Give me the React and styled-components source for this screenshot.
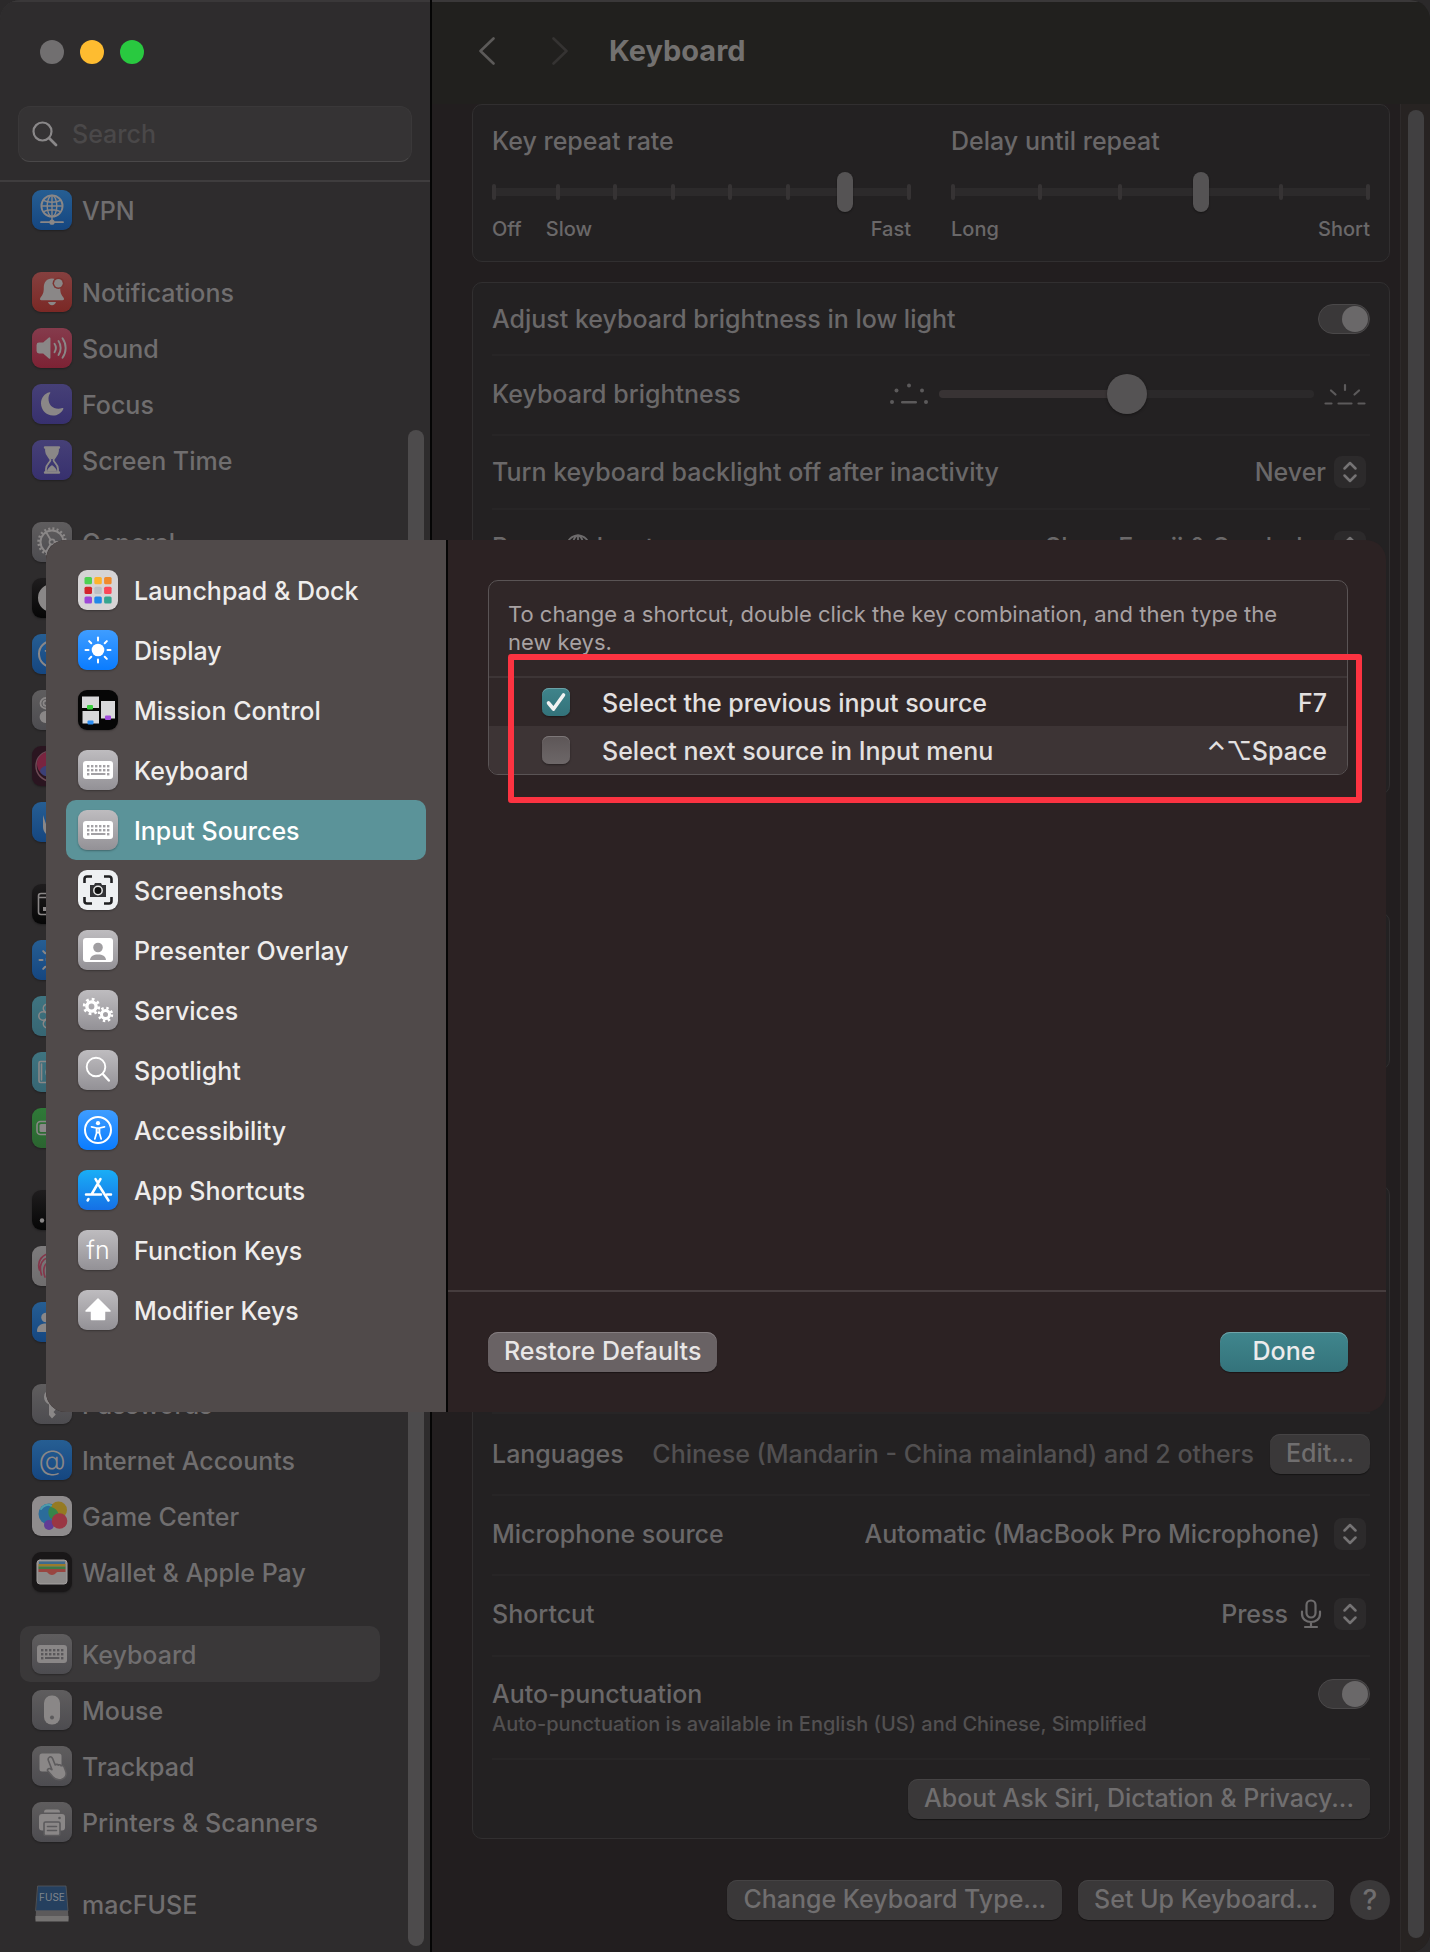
import React from "react";
import styled, { createGlobalStyle, css } from "styled-components";

const GlobalStyle = createGlobalStyle`
  *, *::before, *::after { box-sizing: border-box; }
  body {
    margin: 0;
    background: #2b292a;
    font-family: Inter, "Liberation Sans", sans-serif;
    font-size: 25px;
    font-weight: 500;
    line-height: 32px;
    color: #6a6869;
  }
  button, input, select { font: inherit; color: inherit; }
`;

/* ---------- window ---------- */

const Window = styled.div`
  position: relative;
  display: flex;
  min-height: 100vh;
  overflow: hidden;
  border-radius: 20px 20px 20px 0;
  box-shadow: inset 0 2px 0 #3a3839;
`;

const Sidebar = styled.aside`
  display: flex;
  flex-direction: column;
  flex: 0 0 432px;
  min-width: 0;
  background: #2e2c2d;
  border-right: 2px solid #050505;
  box-shadow: inset 0 2px 0 #3a3839;
`;

const Lights = styled.div`
  display: flex;
  gap: 16px;
  padding: 40px 40px 42px;
`;

const Light = styled.button`
  width: 24px;
  height: 24px;
  padding: 0;
  border: 0;
  border-radius: 50%;
  background: ${(p) => p.$color};
`;

const SearchField = styled.label`
  display: flex;
  align-items: center;
  gap: 14px;
  height: 56px;
  margin: 0 18px 18px;
  padding: 0 13px;
  border: 1px solid #3a3839;
  border-bottom-color: #4a4849;
  border-radius: 12px;
  background: #353334;
`;

const SearchInput = styled.input`
  flex: 1;
  min-width: 0;
  padding: 0;
  border: 0;
  outline: 0;
  background: transparent;
  &::placeholder { color: #4a4849; opacity: 1; }
`;

const SidebarBody = styled.div`
  display: flex;
  flex: 1;
  padding-left: 20px;
  border-top: 2px solid #3f3d3e;
`;

const Nav = styled.nav`
  flex: 1;
  min-width: 0;
  display: flex;
  flex-direction: column;
  gap: 26px;
  margin-right: 28px;
  padding-bottom: 20px;
`;

const NavGroup = styled.ul`
  margin: 0;
  padding: 0;
  list-style: none;
`;

const NavLink = styled.a`
  display: flex;
  align-items: center;
  gap: 10px;
  height: 56px;
  padding: 0 12px;
  border-radius: 10px;
  color: #706e6f;
  text-decoration: none;
  white-space: nowrap;
  background: ${(p) => (p.$active ? "#3a3839" : "transparent")};
`;

const LinkText = styled.span`
  padding-top: 2px;
`;

const SidebarThumb = styled.div`
  flex: none;
  width: 16px;
  margin: 248px 6px 6px 0;
  border-radius: 8px;
  background: #4d4b4c;
`;

const Tile = styled.span`
  flex: none;
  display: grid;
  place-items: center;
  width: 40px;
  height: 40px;
  border-radius: 9px;
  background: ${(p) => p.$bg};
  color: ${(p) => p.$color || "#fff"};
  overflow: hidden;
  ${(p) => !p.$flat && css`box-shadow: 0 1px 2px rgba(0, 0, 0, 0.3);`}
`;

const TileText = styled.span`
  font-size: ${(p) => p.$size}px;
  font-weight: 300;
  line-height: ${(p) => p.$line}px;
`;

/* ---------- main column ---------- */

const Main = styled.main`
  flex: 1;
  min-width: 0;
  display: flex;
  flex-direction: column;
  background: #221e1f;
`;

const Header = styled.header`
  display: flex;
  align-items: center;
  height: 104px;
  padding: 0 40px 4px 47px;
  background: #21201e;
  border-top: 2px solid #3a3839;
`;

const NavArrow = styled.button`
  display: block;
  width: 16px;
  height: 28px;
  margin-right: ${(p) => p.$after}px;
  padding: 0;
  border: 0;
  background: none;
  color: ${(p) => p.$color};
`;

const Title = styled.h1`
  margin: 0;
  font-size: 29px;
  line-height: 36px;
  font-weight: 700;
  color: #737170;
`;

const ScrollArea = styled.div`
  display: flex;
  flex: 1;
`;

const Content = styled.div`
  flex: 1;
  min-width: 0;
  padding: 0 10px 32px 40px;
`;

const MainTrack = styled.div`
  display: flex;
  flex: 0 0 30px;
  padding: 6px 5px 14px 7px;
  border-left: 1px solid #2e2a2a;
  background: #272322;
`;

const MainThumb = styled.div`
  width: 16px;
  border-radius: 8px;
  background: #414041;
`;

const Card = styled.section`
  min-height: ${(p) => p.$min || 0}px;
  margin-bottom: ${(p) => p.$after}px;
  padding: 0 19px;
  border: 1px solid #312f30;
  border-radius: 10px;
  background: #232122;
`;

const RepeatGrid = styled.div`
  display: grid;
  grid-template-columns: 1fr 1fr;
  gap: 40px;
  padding: 20px 0;
`;

const RepeatField = styled.div`
  display: flex;
  flex-direction: column;
`;

const StepSlider = styled.div`
  display: grid;
  align-items: center;
  margin: 15px 0 5px;
  & > * { grid-area: 1 / 1; }
`;

const TickRow = styled.div`
  display: flex;
  justify-content: space-between;
  align-items: center;
  height: 8px;
  padding: 0 6px;
  background: #2c2a2b;
`;

const Tick = styled.i`
  width: 4px;
  height: 16px;
  border-radius: 2px;
  background: #363334;
  &:first-child { transform: translateX(-6px); }
  &:last-child { transform: translateX(6px); }
`;

const StepInput = styled.input`
  width: 100%;
  height: 40px;
  margin: 0;
  appearance: none;
  background: transparent;
  &::-webkit-slider-thumb {
    appearance: none;
    width: 16px;
    height: 40px;
    border-radius: 8px;
    background: #555354;
    box-shadow: 0 1px 2px rgba(0, 0, 0, 0.4);
  }
`;

const Scale = styled.div`
  display: flex;
  gap: 24px;
  font-size: 20px;
  line-height: 24px;
  & > :last-child { margin-left: auto; }
`;

const Row = styled.div`
  display: flex;
  align-items: center;
  justify-content: space-between;
  gap: 16px;
  height: ${(p) => p.$h}px;
  padding-bottom: ${(p) => p.$lift || 0}px;
  white-space: nowrap;
  border-bottom: ${(p) => (p.$last ? "0" : "2px solid #272526")};
`;

const RowLabel = styled.label`
  display: flex;
  align-items: center;
  gap: 6px;
`;

const Stack = styled.div`
  display: flex;
  flex-direction: column;
`;

const Hint = styled.span`
  font-size: 20px;
  line-height: 28px;
  color: #525051;
`;

const LanguageValue = styled.span`
  margin-left: auto;
  color: #525051;
`;

const Switch = styled.input`
  flex: none;
  width: 52px;
  height: 30px;
  margin: ${(p) => p.$margin || "0"};
  appearance: none;
  border: 1px solid #4a4849;
  border-radius: 15px;
  background: #3a3839;
  &::before {
    content: "";
    display: block;
    width: 26px;
    height: 26px;
    margin: 1px 1px 1px 23px;
    border-radius: 50%;
    background: #6a6869;
  }
  &:not(:checked)::before { margin-left: 1px; }
`;

const BrightnessControl = styled.div`
  display: flex;
  align-items: center;
  gap: 10px;
  padding-right: 4px;
`;

const BrightnessInput = styled.input`
  width: 375px;
  height: 40px;
  margin: 0;
  appearance: none;
  background: transparent;
  &::-webkit-slider-runnable-track {
    height: 8px;
    border-radius: 4px;
    background: linear-gradient(to right, #383334 50%, #2b292a 50%);
  }
  &::-webkit-slider-thumb {
    appearance: none;
    width: 40px;
    height: 40px;
    margin-top: -16px;
    border-radius: 50%;
    background: #555354;
    box-shadow: 0 1px 3px rgba(0, 0, 0, 0.4);
  }
`;

const Popup = styled.div`
  display: flex;
  align-items: center;
  gap: ${(p) => p.$gap || 8}px;
  padding-right: 4px;
`;

const PopupSelect = styled.select`
  field-sizing: content;
  appearance: none;
  padding: 0;
  border: 0;
  outline: 0;
  background: transparent;
`;

const Stepper = styled.span`
  display: grid;
  place-items: center;
  width: 32px;
  height: 32px;
  border-radius: 8px;
  background: #2c2a2b;
  color: #757374;
`;

const PushButton = styled.button`
  height: 40px;
  padding: 0 16px 3px;
  border: 0;
  border-radius: 10px;
  line-height: 32px;
  white-space: nowrap;
  color: #706e6f;
  background: #3a3839;
  box-shadow: inset 0 1px 0 #454344, 0 1px 1px rgba(0, 0, 0, 0.4);
  ${(p) => p.$tone === "bright" && css`
    color: #e8e6e6;
    background: #696264;
    box-shadow: inset 0 1px 0 #857e80, 0 1px 1px rgba(0, 0, 0, 0.4);
  `}
  ${(p) => p.$tone === "accent" && css`
    width: 128px;
    color: #ececec;
    background: linear-gradient(#40868d, #34737b);
    box-shadow: inset 0 1px 0 #70a4a9, 0 1px 1px rgba(0, 0, 0, 0.4);
  `}
`;

const HelpButton = styled.button`
  width: 40px;
  height: 40px;
  padding: 0;
  border: 0;
  border-radius: 50%;
  font-size: 28px;
  color: #706e6f;
  background: #3a3839;
`;

const BottomBar = styled.div`
  display: flex;
  justify-content: flex-end;
  gap: 16px;
`;

/* ---------- sheet ---------- */

const Sheet = styled.section`
  position: absolute;
  top: 540px;
  left: 46px;
  right: 44px;
  height: 872px;
  display: flex;
  overflow: hidden;
  border-radius: 20px;
  background: #2c2223;
`;

const SheetSide = styled.nav`
  flex: 0 0 402px;
  padding: 20px;
  background: #504a4a;
  border-right: 2px solid #050505;
`;

const SheetLink = styled.a`
  display: flex;
  align-items: center;
  gap: 16px;
  height: 60px;
  padding: 0 12px;
  border-radius: 10px;
  color: ${(p) => (p.$active ? "#ffffff" : "#efedec")};
  text-decoration: none;
  white-space: nowrap;
  background: ${(p) => (p.$active ? "#5b9399" : "transparent")};
`;

const SheetMain = styled.div`
  flex: 1;
  min-width: 0;
  display: flex;
  flex-direction: column;
`;

const SheetContent = styled.div`
  flex: 1;
  padding: 40px 38px 0 40px;
`;

const ShortcutCard = styled.div`
  position: relative;
  border: 1px solid #5a5455;
  border-radius: 10px;
  background: #302728;
`;

const ShortcutHint = styled.p`
  margin: 0;
  padding: 19px 48px 20px 19px;
  font-size: 22px;
  font-weight: 400;
  line-height: 28px;
  color: #a8a2a3;
`;

const ShortcutTable = styled.table`
  width: 100%;
  border-collapse: separate;
  border-spacing: 0;
  border-top: 2px solid #3d3536;
  color: #e3e0e0;
`;

const ShortcutRow = styled.tr`
  height: 48px;
  background: ${(p) => (p.$striped ? "#3d3435" : "transparent")};
  td { padding: 2px 0 0; }
  td:first-child { width: 113px; padding: 0 0 0 53px; }
  td:last-child { padding-right: 20px; text-align: right; }
  ${(p) => p.$striped && css`
    td:first-child { border-bottom-left-radius: 9px; }
    td:last-child { border-bottom-right-radius: 9px; }
  `}
`;

const CheckCell = styled.span`
  display: grid;
  width: 28px;
  & > * { grid-area: 1 / 1; }
  svg { pointer-events: none; display: block; }
`;

const Check = styled.input`
  width: 28px;
  height: 28px;
  margin: 0;
  appearance: none;
  border-radius: 7px;
  background: linear-gradient(#5d5657, #6d6768);
  box-shadow: inset 0 1px 0 #7d7778, 0 1px 2px rgba(0, 0, 0, 0.4);
  &:checked {
    background: linear-gradient(#3f848b, #33727a);
    box-shadow: inset 0 1px 0 #6ba0a6, 0 1px 2px rgba(0, 0, 0, 0.4);
  }
`;

const Highlight = styled.div`
  position: absolute;
  inset: 73px -15px -29px 19px;
  border: 6px solid #fc3341;
  border-radius: 3px;
  pointer-events: none;
`;

const SheetFooter = styled.footer`
  display: flex;
  justify-content: space-between;
  padding: 40px 38px 40px 40px;
  border-top: 2px solid #463d3e;
`;

/* ---------- glyphs ---------- */

const Glyph = ({ children, size = 40, ...rest }) => (
  <svg width={size} height={size} viewBox="0 0 40 40" fill="none" stroke="none" strokeLinecap="round" strokeLinejoin="round" aria-hidden="true" {...rest}>
    {children}
  </svg>
);

const Gear = ({ x, y, r, w = 3, t = 2.4, n = 8 }) => {
  const outer = r + w / 2 + t / 2 - 0.4;
  const step = (2 * Math.PI * outer) / n;
  return (
    <g stroke="currentColor" strokeLinecap="butt">
      <circle cx={x} cy={y} r={r} strokeWidth={w} />
      <circle cx={x} cy={y} r={outer} strokeWidth={t} strokeDasharray={`${step * 0.48} ${step * 0.52}`} />
    </g>
  );
};

const KeyboardGlyph = ({ hole }) => (
  <Glyph>
    <rect x="5" y="11" width="30" height="18" rx="3" fill="currentColor" />
    <g fill={hole}>
      {[0, 1, 2, 3, 4, 5].map((i) => (
        <React.Fragment key={i}>
          <rect x={9 + i * 4} y="15" width="2.4" height="2.4" />
          <rect x={9 + i * 4} y="19" width="2.4" height="2.4" />
        </React.Fragment>
      ))}
      <rect x="9" y="23" width="2.4" height="2.4" />
      <rect x="13" y="23" width="14.4" height="2" />
      <rect x="29" y="23" width="2.4" height="2.4" />
    </g>
  </Glyph>
);

const SunGlyph = () => (
  <Glyph stroke="currentColor" strokeWidth="2">
    <circle cx="20" cy="20" r="6.3" fill="currentColor" stroke="none" />
    {[0, 45, 90, 135, 180, 225, 270, 315].map((a) => (
      <path key={a} d="M20 7.5V10.5" transform={`rotate(${a} 20 20)`} />
    ))}
  </Glyph>
);

const PersonCircleGlyph = () => (
  <Glyph stroke="currentColor" strokeWidth="2">
    <circle cx="20" cy="20" r="13" />
    <circle cx="20" cy="13.2" r="2.1" fill="currentColor" stroke="none" />
    <path d="M13.5 16.8l5 1.2h3l5-1.2M18.5 18.2v5L16.8 29M21.5 18.2v5L23.2 29M18.8 18.5h2.4v4.2h-2.4z" strokeWidth="1.7" />
  </Glyph>
);

const glyphs = {
  vpn: (
    <Glyph stroke="currentColor" strokeWidth="1.4">
      <circle cx="20" cy="16" r="10.6" strokeWidth="1.8" />
      <ellipse cx="20" cy="16" rx="4.8" ry="10.6" />
      <path d="M20 5.4v26M9.6 16h20.8M11.4 10.4c5 2.4 12.2 2.4 17.2 0M11.4 21.6c5-2.4 12.2-2.4 17.2 0" />
      <path d="M9 32.2h22" strokeWidth="1.8" />
      <circle cx="20" cy="32.2" r="2.6" fill="currentColor" stroke="none" />
    </Glyph>
  ),
  bell: (
    <Glyph>
      <path d="M20 6.6c-5.6 0-8.2 4-8.2 9 0 6.4-1.6 7.8-3.4 10.2-.9 1.3-.4 2.4 1 2.4h21.2c1.4 0 1.9-1.1 1-2.4-1.8-2.4-3.4-3.8-3.4-10.2 0-5-2.6-9-8.200-9z" fill="currentColor" />
      <path d="M16 30h8c-.5 2-2 3.2-4 3.2S16.500 32 16 30z" fill="currentColor" />
      <circle cx="26.4" cy="11.2" r="5.8" fill="#7c3431" />
      <circle cx="26.4" cy="11.2" r="4.3" fill="currentColor" />
    </Glyph>
  ),
  sound: (
    <Glyph stroke="currentColor" strokeWidth="1.9">
      <path d="M7 15.500h4.500l6-5.200v19.400l-6-5.200H7c-1 0-1.500-.6-1.500-1.500v-6c0-.9.500-1.500 1.500-1.500z" fill="currentColor" />
      <path d="M22.500 15.800c1.600 2.400 1.600 6 0 8.400M26.500 13c2.900 4 2.900 10 0 14M30.500 10.200c4.200 5.800 4.200 13.800 0 19.600" />
    </Glyph>
  ),
  moon: (
    <Glyph>
      <path d="M17.500 8.200c-5 1.200-8.500 5.700-8.500 11C9 26 14.300 31.500 21 31.500c4.600 0 8.500-2.600 10.300-6.600.3-.8-.3-1.200-1-.9-1.300.5-2.500.7-3.900.7-6 0-9.900-4-9.900-9.900 0-2 .5-3.900 1.600-5.500.5-.8.200-1.300-.6-1.100z" fill="currentColor" />
    </Glyph>
  ),
  hourglass: (
    <Glyph>
      <path d="M13 7.500h14M13 32.500h14" stroke="currentColor" strokeWidth="2.4" />
      <path d="M14 8v3c0 5 4.500 6.500 4.500 9s-4.500 4-4.500 9v3M26 8v3c0 5-4.500 6.500-4.500 9s4.500 4 4.500 9v3" stroke="currentColor" strokeWidth="1.8" />
      <path d="M14 8h12v4c-.4 3-3.500 5-5 7h-2c-1.500-2-4.600-4-5-7zM15 31.500c.5-3.500 3-4.500 5-6.500 2 2 4.500 3 5 6.500z" fill="currentColor" />
    </Glyph>
  ),
  gear: (
    <Glyph stroke="currentColor">
      <Gear x={20} y={20} r={11.5} w={2} t={2.6} n={20} />
      <circle cx="20" cy="20" r="2.6" strokeWidth="1.6" />
      <path d="M18.600 17.800L14 10M22.600 20H31M18.600 22.200L14 30" strokeWidth="1.8" />
    </Glyph>
  ),
  appearance: (
    <Glyph>
      <circle cx="20" cy="20" r="13" stroke="currentColor" strokeWidth="2" />
      <path d="M20 7a13 13 0 000 26z" fill="currentColor" />
    </Glyph>
  ),
  accessibility: <PersonCircleGlyph />,
  control: (
    <Glyph stroke="currentColor" strokeWidth="1.8">
      <rect x="8.500" y="8" width="23" height="10.500" rx="5.250" />
      <circle cx="14" cy="13.200" r="2.6" />
      <rect x="8.500" y="22" width="23" height="10" rx="5" fill="currentColor" />
    </Glyph>
  ),
  siri: (
    <Glyph>
      <circle cx="19" cy="20" r="15" stroke="#6c4a55" strokeWidth="1.5" />
      <circle cx="17" cy="18" r="12" fill="#7a2440" />
      <ellipse cx="19" cy="25" rx="11" ry="6" fill="#3b4076" />
    </Glyph>
  ),
  hand: (
    <Glyph>
      <path d="M11 13v12c0 5 4 9 9 9s9-4 9-9V12h-4v8h-2V8h-4v12h-2V10h-3v12z" fill="currentColor" />
    </Glyph>
  ),
  desktop: (
    <Glyph stroke="currentColor" strokeWidth="1.6">
      <rect x="6.500" y="9.500" width="27" height="21" rx="2.5" />
      <path d="M7 13.500h26" />
      <rect x="11" y="23" width="5" height="4" fill="currentColor" stroke="none" />
    </Glyph>
  ),
  displays: <SunGlyph />,
  flower: (
    <Glyph stroke="currentColor" strokeWidth="1.5">
      {[0, 60, 120, 180, 240, 300].map((a) => (
        <circle key={a} cx="20" cy="11" r="4.2" transform={`rotate(${a + 30} 20 20)`} />
      ))}
    </Glyph>
  ),
  saver: (
    <Glyph stroke="currentColor" strokeWidth="1.6">
      <rect x="7" y="9.500" width="26" height="21" rx="1.5" />
      <circle cx="20" cy="20" r="6" />
      <path d="M9.500 12v16" />
    </Glyph>
  ),
  battery: (
    <Glyph>
      <rect x="5" y="13.500" width="28" height="13" rx="3.5" stroke="currentColor" strokeWidth="1.6" />
      <rect x="7.500" y="16" width="20" height="8" rx="1.5" fill="currentColor" />
    </Glyph>
  ),
  lock: (
    <Glyph fill="currentColor">
      <circle cx="10" cy="30.500" r="2.2" />
      <circle cx="18" cy="30.500" r="2.2" />
      <circle cx="26" cy="30.500" r="2.2" />
    </Glyph>
  ),
  touch: (
    <Glyph stroke="#84364a" strokeWidth="1.7">
      <path d="M7.500 24c-3-9 3-16.500 12-16.500M9.500 29c-1-4-1.500-5-1-9 .8-5 5-9 11-9M13 31c-2-5-2.500-14 6.500-16.500M17 32c-3-7-1.500-12 3-13" />
    </Glyph>
  ),
  users: (
    <Glyph fill="currentColor">
      <circle cx="14" cy="15.500" r="4.8" />
      <path d="M5 29c0-5 3.500-7.500 9-7.500s9 2.500 9 7.500c0 .6-.4 1-1 1H6c-.6 0-1-.4-1-1z" />
      <circle cx="27" cy="15" r="4" />
    </Glyph>
  ),
  key: (
    <Glyph fill="currentColor">
      <path d="M20 5a8 8 0 00-8 8c0 3.500 2 6.200 5 7.400V31l3 3.500 3.800-4-2.300-2.500 2.300-2.500-2.300-2.500v-2.600c3.500-1 6.500-4 6.500-7.400a8 8 0 00-8-8z" />
    </Glyph>
  ),
  game: (
    <Glyph>
      <circle cx="17" cy="18" r="10.5" fill="#2b6c9a" />
      <circle cx="26.500" cy="14" r="8.5" fill="#957a22" />
      <path d="M18.500 11c2 0 7 2 8.500 8-1.500 3-4 4-7 4-4-1-5-10-1.500-12z" fill="#37854a" />
      <circle cx="17" cy="29" r="5" fill="#613c95" />
      <circle cx="27.500" cy="25" r="7.8" fill="#9a3744" />
      <path d="M9 13c2.500-4 7-5 10-3.500" stroke="#4c9bab" strokeWidth="2" />
    </Glyph>
  ),
  wallet: (
    <Glyph>
      <rect x="5" y="8" width="30" height="24" rx="3" fill="#8d8a89" />
      <path d="M7 9.500h26v2.500H7z" fill="#3d6a8e" />
      <path d="M6.500 12h27v2.500h-27z" fill="#9a7a2c" />
      <path d="M6.500 14.500h27V17h-27z" fill="#3f7b45" />
      <path d="M6.500 17h27v3h-8c-1.500 0-2 3-5.500 3s-4-3-5.500-3h-8z" fill="#994540" />
      <rect x="5" y="8" width="30" height="24" rx="3" stroke="#a3a09f" strokeWidth="1" />
    </Glyph>
  ),
  mouse: (
    <Glyph>
      <rect x="12" y="5.500" width="16" height="29" rx="7.5" fill="currentColor" />
      <circle cx="20" cy="27.500" r="2" fill="#5b5a5c" />
    </Glyph>
  ),
  trackpad: (
    <Glyph>
      <rect x="7.500" y="7.500" width="22" height="18" rx="2.5" fill="currentColor" />
      <path d="M17 11.500c1.500-1.300 3-.6 3.600 1l2.600 6.500c1-1 2.400-.8 3 .2 1-.8 2.400-.4 2.900.6 1.200-.6 2.500 0 3 1.200l1.700 4.500c1.300 4-1 7-4.500 8-3.500.9-6.500-.4-8.500-2.700l-5-5.800c-1-1.500.6-3 2.500-2.200l1.700.9-3.700-9.500c-.4-1.200.2-2.300.7-2.700z" fill="currentColor" stroke="#5d5b5d" strokeWidth="1.6" />
    </Glyph>
  ),
  printer: (
    <Glyph>
      <path d="M12 10.500c0-2 .8-3 2.500-3h11c1.700 0 2.500 1 2.500 3z" fill="currentColor" />
      <rect x="7" y="12" width="26" height="16.500" rx="3" fill="currentColor" />
      <circle cx="27.500" cy="16" r="1.3" fill="#5b5a5c" />
      <rect x="12" y="20" width="16" height="13.500" rx="1.5" fill="currentColor" stroke="#5b5a5c" strokeWidth="1.6" />
      <path d="M15.500 24.500h9M15.500 28.500h9" stroke="#5b5a5c" strokeWidth="1.6" />
    </Glyph>
  ),
  fuse: (
    <Glyph>
      <path d="M6 2h28l2 25H4z" fill="#25405f" stroke="#55595e" strokeWidth=".8" />
      <path d="M4 26.500h32l.5 9h-33z" fill="#5c5a5b" />
      <path d="M3.500 32h33v5.500h-33z" fill="#757372" />
      <text x="20" y="17" fontSize="10" fontWeight="400" textAnchor="middle" fill="#80868c" fontFamily="Inter, sans-serif">FUSE</text>
    </Glyph>
  ),
  launchpad: (
    <Glyph>
      {["#4fd052", "#fdb32c", "#f08a2c", "#d3242b", "#bcc0c4", "#fb4759", "#9d48d6", "#2087e8", "#35a58f"].map((c, i) => (
        <rect key={c} x={6.5 + (i % 3) * 9.8} y={7 + Math.floor(i / 3) * 9.7} width="7.5" height="7.2" rx="1.5" fill={c} />
      ))}
    </Glyph>
  ),
  mission: (
    <Glyph>
      <rect x="4" y="6.500" width="17" height="11.500" fill="#d8d8da" />
      <rect x="23" y="11" width="14" height="17.500" fill="#d8d8da" />
      <rect x="4.500" y="21" width="16.500" height="12.500" fill="#d8d8da" />
      <rect x="9" y="15" width="6" height="4.500" rx="1" fill="#3bcf3f" />
      <rect x="9.500" y="30.500" width="6" height="4" rx="1" fill="#2b8cf0" />
      <rect x="27" y="25.500" width="6" height="4.500" rx="1" fill="#a14ddc" />
    </Glyph>
  ),
  screenshots: (
    <Glyph>
      <path d="M6.500 13V9c0-1.700.8-2.500 2.500-2.500h5M26 6.500h5c1.700 0 2.500.8 2.500 2.500v4M33.500 27v4c0 1.700-.8 2.500-2.500 2.500h-5M14 33.500H9c-1.700 0-2.500-.8-2.500-2.500v-4" stroke="#1f1f21" strokeWidth="2.6" strokeLinecap="butt" />
      <path d="M12 15h4l1-2h6l1 2h4v12H12z" fill="#333336" />
      <circle cx="20" cy="20.500" r="4.2" fill="#111" stroke="#e8e8e8" strokeWidth="1.5" />
    </Glyph>
  ),
  presenter: (
    <Glyph>
      <rect x="5" y="8" width="30" height="24" rx="3" fill="#fff" />
      <circle cx="20" cy="17.500" r="4.8" fill="#a09ea1" />
      <path d="M12 30c.5-4 3.500-5.500 8-5.500s7.500 1.500 8 5.500z" fill="#a09ea1" />
    </Glyph>
  ),
  services: (
    <Glyph>
      <Gear x={13.5} y={16.5} r={4.6} w={3.4} t={2.8} n={8} />
      <Gear x={27.5} y={24.5} r={4} w={3} t={2.6} n={8} />
    </Glyph>
  ),
  spotlight: (
    <Glyph stroke="currentColor" strokeWidth="1.9">
      <circle cx="18" cy="17" r="9.3" />
      <path d="M24.800 24l6 6.500" strokeWidth="2.4" />
    </Glyph>
  ),
  appstore: (
    <Glyph stroke="currentColor" strokeWidth="2.5">
      <path d="M22.500 9L13.500 24.500M17.500 9l1.500 2.600M21 15.500l9.500 15M8 24.500h15M29 24.500h4M10.500 29l-.9 1.500" />
    </Glyph>
  ),
  modifier: (
    <Glyph>
      <path d="M20 9l12 12h-5.500v8.500h-13V21H8z" fill="currentColor" stroke="currentColor" strokeWidth="1.5" />
    </Glyph>
  ),
};

const Chevrons = () => (
  <Stepper aria-hidden="true">
    <svg width="16" height="22" viewBox="0 0 16 22" fill="none" stroke="currentColor" strokeWidth="2.5" strokeLinecap="round" strokeLinejoin="round">
      <path d="M2.500 7.500L8 2l5.500 5.500M2.500 14.500L8 20l5.500-5.500" />
    </svg>
  </Stepper>
);

const SearchGlyph = () => (
  <svg width="26" height="26" viewBox="0 0 26 26" fill="none" stroke="#8a8889" strokeWidth="2.2" strokeLinecap="round" aria-hidden="true">
    <circle cx="10.500" cy="10.500" r="9" />
    <path d="M17.500 17.500L24 24" strokeWidth="2.8" />
  </svg>
);

const MicGlyph = () => (
  <svg width="22" height="30" viewBox="0 0 22 30" fill="none" stroke="#6d6b6c" strokeWidth="2.2" strokeLinecap="round" aria-hidden="true">
    <rect x="6.500" y="1.500" width="9" height="17" rx="4.5" />
    <path d="M2 12.500v2.500c0 5 4 8 9 8s9-3 9-8v-2.500M11 23v5M5 28h12" />
  </svg>
);

const GlobeGlyph = () => (
  <svg width="26" height="26" viewBox="0 0 26 26" fill="none" stroke="#6d6b6c" strokeWidth="1.8" aria-hidden="true">
    <circle cx="13" cy="13" r="11.5" />
    <ellipse cx="13" cy="13" rx="5.5" ry="11.5" />
    <path d="M13 1.500v23M1.500 13h23M3.500 7c5 2.500 14 2.500 19 0M3.500 19c5-2.500 14-2.500 19 0" />
  </svg>
);

const DimGlyph = () => (
  <svg width="40" height="24" viewBox="0 0 40 24" fill="#5c5a5b" aria-hidden="true">
    <circle cx="3" cy="20" r="2" />
    <circle cx="7.500" cy="8.500" r="2" />
    <circle cx="20" cy="3.500" r="2" />
    <circle cx="33" cy="8.500" r="2" />
    <circle cx="37" cy="20" r="2" />
    <rect x="12" y="19" width="16" height="2.500" rx="1.2" />
  </svg>
);

const BrightGlyph = () => (
  <svg width="42" height="24" viewBox="0 0 42 24" fill="none" stroke="#5c5a5b" strokeWidth="2.2" strokeLinecap="round" aria-hidden="true">
    <path d="M1.500 21.500h6M14.500 21.500h13M34.500 21.500h6M21 3v5M7 8.500l4.500 4M35 8.500l-4.500 4" />
  </svg>
);

/* ---------- data ---------- */

const blue = "linear-gradient(#265e93, #154680)";
const gray = "linear-gradient(#5f5d5e, #4d4c50)";
const black = "linear-gradient(#1f1d1e, #060606)";
const teal = "linear-gradient(#3f7480, #376673)";
const indigo = "linear-gradient(#464077, #37306e)";

const sidebarGroups = [
  [{ id: "vpn", label: "VPN", bg: blue }],
  [
    { id: "bell", label: "Notifications", bg: "linear-gradient(#85403f, #7b2825)" },
    { id: "sound", label: "Sound", bg: "linear-gradient(#853b4c, #7d2234)" },
    { id: "moon", label: "Focus", bg: indigo },
    { id: "hourglass", label: "Screen Time", bg: indigo },
  ],
  [
    { id: "gear", label: "General", bg: gray },
    { id: "appearance", name: "Appearance", bg: black },
    { id: "accessibility", name: "Accessibility", bg: blue },
    { id: "control", name: "Control Center", bg: gray },
    { id: "siri", name: "Siri", bg: "#2a1520" },
    { id: "hand", name: "Privacy", bg: blue },
  ],
  [
    { id: "desktop", name: "Desktop", bg: black },
    { id: "displays", name: "Displays", bg: blue },
    { id: "flower", name: "Wallpaper", bg: teal },
    { id: "saver", name: "Screen Saver", bg: teal },
    { id: "battery", name: "Battery", bg: "linear-gradient(#2f7a38, #2b6430)" },
  ],
  [
    { id: "lock", name: "Lock Screen", bg: black },
    { id: "touch", name: "Touch ID", bg: "linear-gradient(#7d7b7c, #6f6d6e)" },
    { id: "users", name: "Users", bg: blue },
  ],
  [
    { id: "key", label: "Passwords", bg: gray },
    { id: "internet", label: "Internet Accounts", bg: blue, text: "@" },
    { id: "game", label: "Game Center", bg: "#8f8c8d" },
    { id: "wallet", label: "Wallet & Apple Pay", bg: "#191718" },
  ],
  [
    { id: "keyboard", label: "Keyboard", bg: gray, active: true },
    { id: "mouse", label: "Mouse", bg: gray },
    { id: "trackpad", label: "Trackpad", bg: gray },
    { id: "printer", label: "Printers & Scanners", bg: gray },
  ],
  [{ id: "fuse", label: "macFUSE", bg: "transparent", flat: true }],
];

const lightGray = "linear-gradient(#bebcbf, #939196)";
const brightBlue = "linear-gradient(#3f9dff, #0a7cff)";

const sheetItems = [
  { id: "launchpad", label: "Launchpad & Dock", bg: "#d6d4d5" },
  { id: "displays", label: "Display", bg: brightBlue },
  { id: "mission", label: "Mission Control", bg: "#060606" },
  { id: "keyboard", label: "Keyboard", bg: lightGray },
  { id: "inputs", label: "Input Sources", bg: lightGray, active: true },
  { id: "screenshots", label: "Screenshots", bg: "#eef0f2" },
  { id: "presenter", label: "Presenter Overlay", bg: lightGray },
  { id: "services", label: "Services", bg: lightGray },
  { id: "spotlight", label: "Spotlight", bg: lightGray },
  { id: "accessibility", label: "Accessibility", bg: brightBlue },
  { id: "appstore", label: "App Shortcuts", bg: "linear-gradient(#1aaef6, #1570e6)" },
  { id: "fn", label: "Function Keys", bg: lightGray, text: "fn" },
  { id: "modifier", label: "Modifier Keys", bg: lightGray },
];

const shortcuts = [
  { id: "previous", label: "Select the previous input source", keys: "F7", on: true },
  { id: "next", label: "Select next source in Input menu", keys: "⌃⌥Space", on: false },
];

const ItemTile = ({ item, dim }) => (
  <Tile $bg={item.bg} $flat={item.flat} $color={dim ? "#8a8787" : "#ffffff"}>
    {item.text ? (
      <TileText $size={dim ? 28 : 25} $line={dim ? 36 : 40} aria-hidden="true">{item.text}</TileText>
    ) : item.id === "keyboard" || item.id === "inputs" ? (
      <KeyboardGlyph hole={dim ? "#59575a" : "#a3a1a5"} />
    ) : (
      glyphs[item.id]
    )}
  </Tile>
);

const SteppedRange = ({ id, label, steps, value, marks }) => (
  <RepeatField>
    <label htmlFor={id}>{label}</label>
    <StepSlider>
      <TickRow>
        {Array.from({ length: steps + 1 }, (_, i) => <Tick key={i} />)}
      </TickRow>
      <StepInput id={id} type="range" min="0" max={steps} defaultValue={value} />
    </StepSlider>
    <Scale>{marks.map((m) => <span key={m}>{m}</span>)}</Scale>
  </RepeatField>
);

const PopupField = ({ id, value, gap, icon }) => (
  <Popup $gap={gap}>
    <PopupSelect id={id} defaultValue={value}>
      <option>{value}</option>
    </PopupSelect>
    {icon}
    <Chevrons />
  </Popup>
);

export default function App() {
  return (
    <>
      <GlobalStyle />
      <Window>
        <Sidebar>
          <Lights>
            <Light $color="#716f70" aria-label="Close" />
            <Light $color="#febc30" aria-label="Minimize" />
            <Light $color="#29c940" aria-label="Zoom" />
          </Lights>
          <SearchField>
            <SearchGlyph />
            <SearchInput type="search" placeholder="Search" aria-label="Search" />
          </SearchField>
          <SidebarBody>
            <Nav aria-label="Settings">
              {sidebarGroups.map((group) => (
                <NavGroup key={group[0].id}>
                  {group.map((item) => (
                    <li key={item.id}>
                      <NavLink href={`#${item.id}`} $active={item.active} aria-label={item.name}>
                        <ItemTile item={item} dim />
                        <LinkText>{item.label}</LinkText>
                      </NavLink>
                    </li>
                  ))}
                </NavGroup>
              ))}
            </Nav>
            <SidebarThumb />
          </SidebarBody>
        </Sidebar>

        <Main>
          <Header>
            <NavArrow $color="#5c5a59" $after={57} aria-label="Back">
              <svg width="16" height="28" viewBox="0 0 16 28" fill="none" stroke="currentColor" strokeWidth="2.6" strokeLinecap="round" strokeLinejoin="round">
                <path d="M14.500 1.500L1.500 14l13 12.500" />
              </svg>
            </NavArrow>
            <NavArrow $color="#353332" $after={41} aria-label="Forward">
              <svg width="16" height="28" viewBox="0 0 16 28" fill="none" stroke="currentColor" strokeWidth="2.6" strokeLinecap="round" strokeLinejoin="round">
                <path d="M1.500 1.500l13 12.500-13 12.500" />
              </svg>
            </NavArrow>
            <Title>Keyboard</Title>
          </Header>

          <ScrollArea>
            <Content>
              <Card $after={20}>
                <RepeatGrid>
                  <SteppedRange id="repeat-rate" label="Key repeat rate" steps={7} value={6} marks={["Off", "Slow", "Fast"]} />
                  <SteppedRange id="repeat-delay" label="Delay until repeat" steps={5} value={3} marks={["Long", "Short"]} />
                </RepeatGrid>
              </Card>

              <Card $min={513} $after={117}>
                <Row $h={73}>
                  <label htmlFor="low-light">Adjust keyboard brightness in low light</label>
                  <Switch id="low-light" type="checkbox" role="switch" defaultChecked />
                </Row>
                <Row $h={80} $lift={2}>
                  <label htmlFor="brightness">Keyboard brightness</label>
                  <BrightnessControl>
                    <DimGlyph />
                    <BrightnessInput id="brightness" type="range" defaultValue="50" />
                    <BrightGlyph />
                  </BrightnessControl>
                </Row>
                <Row $h={74}>
                  <label htmlFor="backlight">Turn keyboard backlight off after inactivity</label>
                  <PopupField id="backlight" value="Never" />
                </Row>
                <Row $h={80} $lift={4}>
                  <RowLabel htmlFor="globe-key">Press <GlobeGlyph /> key to</RowLabel>
                  <PopupField id="globe-key" value="Show Emoji & Symbols" gap={18} />
                </Row>
              </Card>

              <Card $min={158} $after={115} />

              <Card $after={41}>
                <Row $h={228} />
                <Row $h={82}>
                  <span>Languages</span>
                  <LanguageValue>Chinese (Mandarin - China mainland) and 2 others</LanguageValue>
                  <PushButton>Edit...</PushButton>
                </Row>
                <Row $h={80} $lift={2}>
                  <label htmlFor="mic">Microphone source</label>
                  <PopupField id="mic" value="Automatic (MacBook Pro Microphone)" gap={14} />
                </Row>
                <Row $h={81} $lift={4}>
                  <label htmlFor="dictation">Shortcut</label>
                  <PopupField id="dictation" value="Press" gap={12} icon={<MicGlyph />} />
                </Row>
                <Row $h={103}>
                  <Stack>
                    <label htmlFor="punctuation">Auto-punctuation</label>
                    <Hint>Auto-punctuation is available in English (US) and Chinese, Simplified</Hint>
                  </Stack>
                  <Switch id="punctuation" type="checkbox" role="switch" defaultChecked $margin="0 0 28px" />
                </Row>
                <Row $h={78} $last>
                  <span />
                  <PushButton>About Ask Siri, Dictation & Privacy...</PushButton>
                </Row>
              </Card>

              <BottomBar>
                <PushButton>Change Keyboard Type...</PushButton>
                <PushButton>Set Up Keyboard...</PushButton>
                <HelpButton aria-label="Help">?</HelpButton>
              </BottomBar>
            </Content>
            <MainTrack>
              <MainThumb />
            </MainTrack>
          </ScrollArea>
        </Main>

        <Sheet role="dialog" aria-label="Keyboard Shortcuts">
          <SheetSide aria-label="Shortcut categories">
            {sheetItems.map((item) => (
              <SheetLink key={item.id} href={`#shortcuts-${item.id}`} $active={item.active}>
                <ItemTile item={item} />
                <LinkText>{item.label}</LinkText>
              </SheetLink>
            ))}
          </SheetSide>
          <SheetMain>
            <SheetContent>
              <ShortcutCard>
                <ShortcutHint>
                  To change a shortcut, double click the key combination, and then type the new keys.
                </ShortcutHint>
                <ShortcutTable>
                  <tbody>
                    {shortcuts.map((s, i) => (
                      <ShortcutRow key={s.id} $striped={i % 2 === 1}>
                        <td>
                          <CheckCell>
                            <Check id={s.id} type="checkbox" defaultChecked={s.on} />
                            {s.on && (
                              <svg width="28" height="28" viewBox="0 0 28 28" fill="none" stroke="#f2f2f2" strokeWidth="3.6" strokeLinecap="round" strokeLinejoin="round" aria-hidden="true">
                                <path d="M6.500 15l5 6L21.500 7" />
                              </svg>
                            )}
                          </CheckCell>
                        </td>
                        <td><label htmlFor={s.id}>{s.label}</label></td>
                        <td>{s.keys}</td>
                      </ShortcutRow>
                    ))}
                  </tbody>
                </ShortcutTable>
                <Highlight />
              </ShortcutCard>
            </SheetContent>
            <SheetFooter>
              <PushButton $tone="bright">Restore Defaults</PushButton>
              <PushButton $tone="accent">Done</PushButton>
            </SheetFooter>
          </SheetMain>
        </Sheet>
      </Window>
    </>
  );
}
